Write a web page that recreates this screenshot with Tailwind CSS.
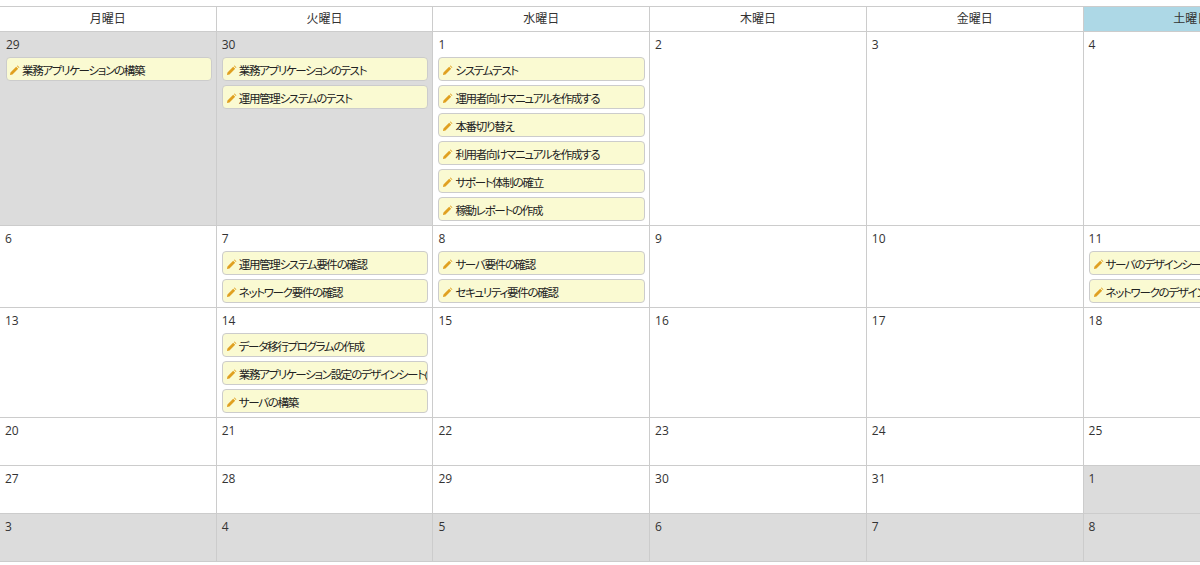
<!DOCTYPE html>
<html lang="ja">

<head>
    <meta charset="UTF-8">
    <title>カレンダー</title>
    <script src="https://cdn.jsdelivr.net/npm/@tailwindcss/browser@4"></script>
</head>

<body class="bg-white overflow-hidden h-[565px] font-['Open_Sans','Noto_Sans_CJK_JP',sans-serif] text-[12px] leading-[16px] text-[#333] [font-feature-settings:'palt']">

    <svg class="hidden">
        <symbol id="pencil" viewBox="0 0 12 12">
            <path d="M1 11 L1.6 8.2 L7.8 2 L10 4.2 L3.8 10.4 Z M8.6 1.2 L9.4 0.6 L11.4 2.6 L10.8 3.4 Z" fill="#e0a020"></path>
        </symbol>
    </svg>

    <div class="pt-[6px] -ml-[1px]">
        <table class="w-[1518px] table-fixed border-collapse">
            <thead>
                <tr class="h-[25px]">
                    <th class="font-normal border border-[#ccc]">月曜日</th>
                    <th class="font-normal border border-[#ccc]">火曜日</th>
                    <th class="font-normal border border-[#ccc]">水曜日</th>
                    <th class="font-normal border border-[#ccc]">木曜日</th>
                    <th class="font-normal border border-[#ccc]">金曜日</th>
                    <th class="font-normal border border-[#ccc] bg-[#add8e6]">土曜日</th>
                    <th class="font-normal border border-[#ccc] bg-[#ffc0cb]">日曜日</th>
                </tr>
            </thead>
            <tbody>
                <!-- 第1週 -->
                <tr>
                    <td class="align-top border border-[#ccc] bg-[#dcdcdc] h-[48px] pl-[6px] pr-[4px]">
                        <div class="h-[25px] pt-[5px]">29</div>
                        <div class="flex items-center h-[24px] mb-[4px] px-[2px] pt-[3px] gap-[2px] bg-[#fafad2] border border-[#ccc] rounded-[4px] overflow-hidden whitespace-nowrap text-[11.5px] tracking-[-1.3px] text-[#222]"><svg class="w-[11px] h-[11px] shrink-0"><use href="#pencil"></use></svg>業務アプリケーションの構築</div>
                    </td>
                    <td class="align-top border border-[#ccc] bg-[#dcdcdc] pl-[5px] pr-[4px]">
                        <div class="h-[25px] pt-[5px]">30</div>
                        <div class="flex items-center h-[24px] mb-[4px] px-[3px] pt-[3px] gap-[2px] bg-[#fafad2] border border-[#ccc] rounded-[4px] overflow-hidden whitespace-nowrap text-[11.5px] tracking-[-1.3px] text-[#222]"><svg class="w-[11px] h-[11px] shrink-0"><use href="#pencil"></use></svg>業務アプリケーションのテスト</div>
                        <div class="flex items-center h-[24px] mb-[4px] px-[3px] pt-[3px] gap-[2px] bg-[#fafad2] border border-[#ccc] rounded-[4px] overflow-hidden whitespace-nowrap text-[11.5px] tracking-[-1.3px] text-[#222]"><svg class="w-[11px] h-[11px] shrink-0"><use href="#pencil"></use></svg>運用管理システムのテスト</div>
                    </td>
                    <td class="align-top border border-[#ccc] pl-[5px] pr-[4px]">
                        <div class="h-[25px] pt-[5px]">1</div>
                        <div class="flex items-center h-[24px] mb-[4px] px-[3px] pt-[3px] gap-[2px] bg-[#fafad2] border border-[#ccc] rounded-[4px] overflow-hidden whitespace-nowrap text-[11.5px] tracking-[-1.3px] text-[#222]"><svg class="w-[11px] h-[11px] shrink-0"><use href="#pencil"></use></svg>システムテスト</div>
                        <div class="flex items-center h-[24px] mb-[4px] px-[3px] pt-[3px] gap-[2px] bg-[#fafad2] border border-[#ccc] rounded-[4px] overflow-hidden whitespace-nowrap text-[11.5px] tracking-[-1.3px] text-[#222]"><svg class="w-[11px] h-[11px] shrink-0"><use href="#pencil"></use></svg>運用者向けマニュアルを作成する</div>
                        <div class="flex items-center h-[24px] mb-[4px] px-[3px] pt-[3px] gap-[2px] bg-[#fafad2] border border-[#ccc] rounded-[4px] overflow-hidden whitespace-nowrap text-[11.5px] tracking-[-1.3px] text-[#222]"><svg class="w-[11px] h-[11px] shrink-0"><use href="#pencil"></use></svg>本番切り替え</div>
                        <div class="flex items-center h-[24px] mb-[4px] px-[3px] pt-[3px] gap-[2px] bg-[#fafad2] border border-[#ccc] rounded-[4px] overflow-hidden whitespace-nowrap text-[11.5px] tracking-[-1.3px] text-[#222]"><svg class="w-[11px] h-[11px] shrink-0"><use href="#pencil"></use></svg>利用者向けマニュアルを作成する</div>
                        <div class="flex items-center h-[24px] mb-[4px] px-[3px] pt-[3px] gap-[2px] bg-[#fafad2] border border-[#ccc] rounded-[4px] overflow-hidden whitespace-nowrap text-[11.5px] tracking-[-1.3px] text-[#222]"><svg class="w-[11px] h-[11px] shrink-0"><use href="#pencil"></use></svg>サポート体制の確立</div>
                        <div class="flex items-center h-[24px] mb-[4px] px-[3px] pt-[3px] gap-[2px] bg-[#fafad2] border border-[#ccc] rounded-[4px] overflow-hidden whitespace-nowrap text-[11.5px] tracking-[-1.3px] text-[#222]"><svg class="w-[11px] h-[11px] shrink-0"><use href="#pencil"></use></svg>稼動レポートの作成</div>
                    </td>
                    <td class="align-top border border-[#ccc] px-[5px]"><div class="h-[25px] pt-[5px]">2</div></td>
                    <td class="align-top border border-[#ccc] px-[5px]"><div class="h-[25px] pt-[5px]">3</div></td>
                    <td class="align-top border border-[#ccc] px-[5px]"><div class="h-[25px] pt-[5px]">4</div></td>
                    <td class="align-top border border-[#ccc] px-[5px]"><div class="h-[25px] pt-[5px]">5</div></td>
                </tr>
                <!-- 第2週 -->
                <tr>
                    <td class="align-top border border-[#ccc] h-[48px] px-[5px]"><div class="h-[25px] pt-[5px]">6</div></td>
                    <td class="align-top border border-[#ccc] pl-[5px] pr-[4px]">
                        <div class="h-[25px] pt-[5px]">7</div>
                        <div class="flex items-center h-[24px] mb-[4px] px-[3px] pt-[3px] gap-[2px] bg-[#fafad2] border border-[#ccc] rounded-[4px] overflow-hidden whitespace-nowrap text-[11.5px] tracking-[-1.3px] text-[#222]"><svg class="w-[11px] h-[11px] shrink-0"><use href="#pencil"></use></svg>運用管理システム要件の確認</div>
                        <div class="flex items-center h-[24px] mb-[4px] px-[3px] pt-[3px] gap-[2px] bg-[#fafad2] border border-[#ccc] rounded-[4px] overflow-hidden whitespace-nowrap text-[11.5px] tracking-[-1.3px] text-[#222]"><svg class="w-[11px] h-[11px] shrink-0"><use href="#pencil"></use></svg>ネットワーク要件の確認</div>
                    </td>
                    <td class="align-top border border-[#ccc] pl-[5px] pr-[4px]">
                        <div class="h-[25px] pt-[5px]">8</div>
                        <div class="flex items-center h-[24px] mb-[4px] px-[3px] pt-[3px] gap-[2px] bg-[#fafad2] border border-[#ccc] rounded-[4px] overflow-hidden whitespace-nowrap text-[11.5px] tracking-[-1.3px] text-[#222]"><svg class="w-[11px] h-[11px] shrink-0"><use href="#pencil"></use></svg>サーバ要件の確認</div>
                        <div class="flex items-center h-[24px] mb-[4px] px-[3px] pt-[3px] gap-[2px] bg-[#fafad2] border border-[#ccc] rounded-[4px] overflow-hidden whitespace-nowrap text-[11.5px] tracking-[-1.3px] text-[#222]"><svg class="w-[11px] h-[11px] shrink-0"><use href="#pencil"></use></svg>セキュリティ要件の確認</div>
                    </td>
                    <td class="align-top border border-[#ccc] px-[5px]"><div class="h-[25px] pt-[5px]">9</div></td>
                    <td class="align-top border border-[#ccc] px-[5px]"><div class="h-[25px] pt-[5px]">10</div></td>
                    <td class="align-top border border-[#ccc] pl-[5px] pr-[4px]">
                        <div class="h-[25px] pt-[5px]">11</div>
                        <div class="flex items-center h-[24px] mb-[4px] px-[3px] pt-[3px] gap-[2px] bg-[#fafad2] border border-[#ccc] rounded-[4px] overflow-hidden whitespace-nowrap text-[11.5px] tracking-[-1.3px] text-[#222]"><svg class="w-[11px] h-[11px] shrink-0"><use href="#pencil"></use></svg>サーバのデザインシートの作成</div>
                        <div class="flex items-center h-[24px] mb-[4px] px-[3px] pt-[3px] gap-[2px] bg-[#fafad2] border border-[#ccc] rounded-[4px] overflow-hidden whitespace-nowrap text-[11.5px] tracking-[-1.3px] text-[#222]"><svg class="w-[11px] h-[11px] shrink-0"><use href="#pencil"></use></svg>ネットワークのデザインシートの作成</div>
                    </td>
                    <td class="align-top border border-[#ccc] px-[5px]"><div class="h-[25px] pt-[5px]">12</div></td>
                </tr>
                <!-- 第3週 -->
                <tr>
                    <td class="align-top border border-[#ccc] h-[48px] px-[5px]"><div class="h-[25px] pt-[5px]">13</div></td>
                    <td class="align-top border border-[#ccc] pl-[5px] pr-[4px]">
                        <div class="h-[25px] pt-[5px]">14</div>
                        <div class="flex items-center h-[24px] mb-[4px] px-[3px] pt-[3px] gap-[2px] bg-[#fafad2] border border-[#ccc] rounded-[4px] overflow-hidden whitespace-nowrap text-[11.5px] tracking-[-1.3px] text-[#222]"><svg class="w-[11px] h-[11px] shrink-0"><use href="#pencil"></use></svg>データ移行プログラムの作成</div>
                        <div class="flex items-center h-[24px] mb-[4px] px-[3px] pt-[3px] gap-[2px] bg-[#fafad2] border border-[#ccc] rounded-[4px] overflow-hidden whitespace-nowrap text-[11.5px] tracking-[-1.3px] text-[#222]"><svg class="w-[11px] h-[11px] shrink-0"><use href="#pencil"></use></svg>業務アプリケーション設定のデザインシート(A</div>
                        <div class="flex items-center h-[24px] mb-[4px] px-[3px] pt-[3px] gap-[2px] bg-[#fafad2] border border-[#ccc] rounded-[4px] overflow-hidden whitespace-nowrap text-[11.5px] tracking-[-1.3px] text-[#222]"><svg class="w-[11px] h-[11px] shrink-0"><use href="#pencil"></use></svg>サーバの構築</div>
                    </td>
                    <td class="align-top border border-[#ccc] px-[5px]"><div class="h-[25px] pt-[5px]">15</div></td>
                    <td class="align-top border border-[#ccc] px-[5px]"><div class="h-[25px] pt-[5px]">16</div></td>
                    <td class="align-top border border-[#ccc] px-[5px]"><div class="h-[25px] pt-[5px]">17</div></td>
                    <td class="align-top border border-[#ccc] px-[5px]"><div class="h-[25px] pt-[5px]">18</div></td>
                    <td class="align-top border border-[#ccc] px-[5px]"><div class="h-[25px] pt-[5px]">19</div></td>
                </tr>
                <!-- 第4週 -->
                <tr>
                    <td class="align-top border border-[#ccc] h-[48px] px-[5px]"><div class="h-[25px] pt-[5px]">20</div></td>
                    <td class="align-top border border-[#ccc] px-[5px]"><div class="h-[25px] pt-[5px]">21</div></td>
                    <td class="align-top border border-[#ccc] px-[5px]"><div class="h-[25px] pt-[5px]">22</div></td>
                    <td class="align-top border border-[#ccc] px-[5px]"><div class="h-[25px] pt-[5px]">23</div></td>
                    <td class="align-top border border-[#ccc] px-[5px]"><div class="h-[25px] pt-[5px]">24</div></td>
                    <td class="align-top border border-[#ccc] px-[5px]"><div class="h-[25px] pt-[5px]">25</div></td>
                    <td class="align-top border border-[#ccc] px-[5px]"><div class="h-[25px] pt-[5px]">26</div></td>
                </tr>
                <!-- 第5週 -->
                <tr>
                    <td class="align-top border border-[#ccc] h-[48px] px-[5px]"><div class="h-[25px] pt-[5px]">27</div></td>
                    <td class="align-top border border-[#ccc] px-[5px]"><div class="h-[25px] pt-[5px]">28</div></td>
                    <td class="align-top border border-[#ccc] px-[5px]"><div class="h-[25px] pt-[5px]">29</div></td>
                    <td class="align-top border border-[#ccc] px-[5px]"><div class="h-[25px] pt-[5px]">30</div></td>
                    <td class="align-top border border-[#ccc] px-[5px]"><div class="h-[25px] pt-[5px]">31</div></td>
                    <td class="align-top border border-[#ccc] bg-[#dcdcdc] px-[5px]"><div class="h-[25px] pt-[5px]">1</div></td>
                    <td class="align-top border border-[#ccc] bg-[#dcdcdc] px-[5px]"><div class="h-[25px] pt-[5px]">2</div></td>
                </tr>
                <!-- 第6週 -->
                <tr>
                    <td class="align-top border border-[#ccc] bg-[#dcdcdc] h-[48px] px-[5px]"><div class="h-[25px] pt-[5px]">3</div></td>
                    <td class="align-top border border-[#ccc] bg-[#dcdcdc] px-[5px]"><div class="h-[25px] pt-[5px]">4</div></td>
                    <td class="align-top border border-[#ccc] bg-[#dcdcdc] px-[5px]"><div class="h-[25px] pt-[5px]">5</div></td>
                    <td class="align-top border border-[#ccc] bg-[#dcdcdc] px-[5px]"><div class="h-[25px] pt-[5px]">6</div></td>
                    <td class="align-top border border-[#ccc] bg-[#dcdcdc] px-[5px]"><div class="h-[25px] pt-[5px]">7</div></td>
                    <td class="align-top border border-[#ccc] bg-[#dcdcdc] px-[5px]"><div class="h-[25px] pt-[5px]">8</div></td>
                    <td class="align-top border border-[#ccc] bg-[#dcdcdc] px-[5px]"><div class="h-[25px] pt-[5px]">9</div></td>
                </tr>
            </tbody>
        </table>
    </div>

</body>

</html>
